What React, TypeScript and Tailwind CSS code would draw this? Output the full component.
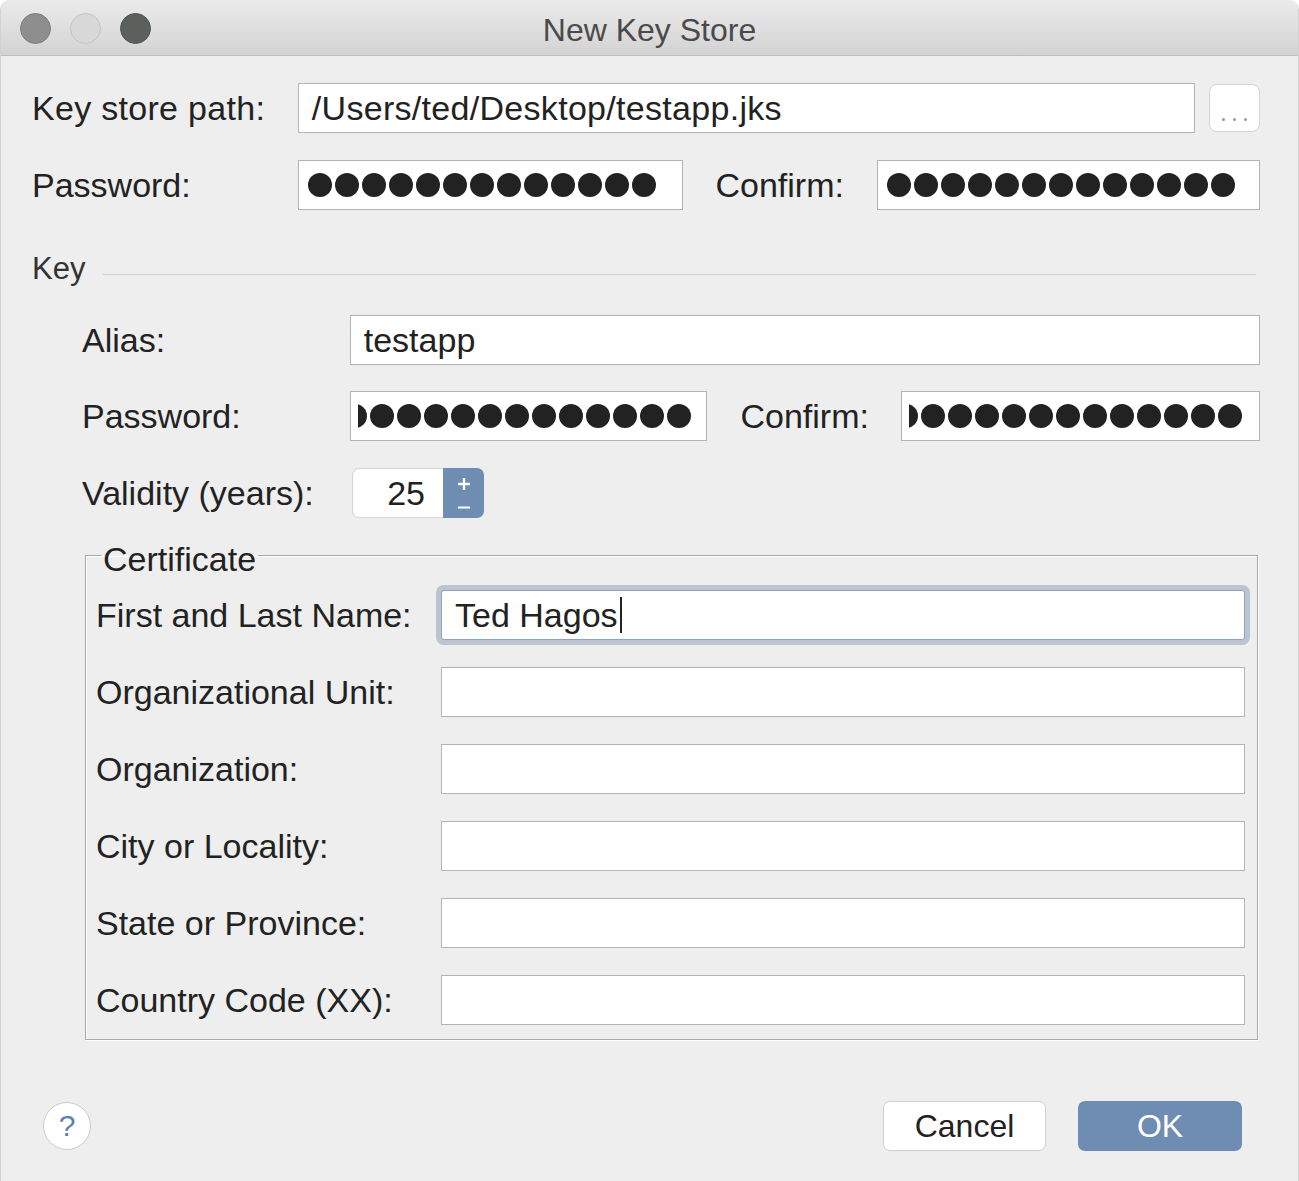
import React from 'react'

const font = { fontFamily: '"Liberation Sans", Arial, sans-serif' }

function Dots({ count, clipped = false }: { count: number; clipped?: boolean }) {
  return (
    <div className="flex h-full items-center gap-[3px] overflow-hidden">
      {clipped && <span className="-ml-[15px] h-[24px] w-[24px] shrink-0 rounded-full bg-[#222]" />}
      {Array.from({ length: count }).map((_, i) => (
        <span key={i} className="h-[24px] w-[24px] shrink-0 rounded-full bg-[#222]" />
      ))}
    </div>
  )
}

function Field({ className = '', children }: { className?: string; children?: React.ReactNode }) {
  return (
    <div className={`h-[50px] border border-[#b4b4b4] bg-white ${className}`}>{children}</div>
  )
}

const certRows = [
  'Organizational Unit:',
  'Organization:',
  'City or Locality:',
  'State or Province:',
  'Country Code (XX):',
]

export default function App() {
  return (
    <div style={font} className="h-[1181px] w-[1299px] overflow-hidden bg-white text-[34px] leading-none text-[#222]">
      <div className="flex h-full flex-col overflow-hidden rounded-t-[10px] border-x border-[#d2d2d2] bg-[#eeeeee]">
        {/* title bar */}
        <div className="relative flex h-[56px] shrink-0 items-center border-b border-[#bdbdbd] bg-gradient-to-b from-[#ebebeb] to-[#d3d3d3]">
          <div className="absolute left-[19px] top-[13px] flex gap-[19px]">
            <span className="h-[31px] w-[31px] rounded-full border border-[#7c7c7c] bg-[#8e8e8e]" />
            <span className="h-[31px] w-[31px] rounded-full border border-[#c4c4c4] bg-[#d8d8d8]" />
            <span className="h-[31px] w-[31px] rounded-full border border-[#4f5451] bg-[#5b605d]" />
          </div>
          <div className="w-full pt-[4px] text-center text-[32px] text-[#4a4a4a]">New Key Store</div>
        </div>

        <div className="flex flex-col pl-[31px] pr-[38px]">
          {/* key store path */}
          <div className="mt-[27px] flex h-[50px] items-center">
            <div className="w-[266px] tracking-[0.3px]">Key store path:</div>
            <Field className="flex w-[898px] items-center pl-[13px] tracking-[0.3px]">/Users/ted/Desktop/testapp.jks</Field>
            <div className="ml-[14px] flex h-[48px] w-[51px] items-end justify-center gap-[8px] rounded-[8px] border border-[#d4d4d4] bg-white pb-[10px]">
              <span className="h-[3px] w-[3px] rounded-full bg-[#999]" />
              <span className="h-[3px] w-[3px] rounded-full bg-[#999]" />
              <span className="h-[3px] w-[3px] rounded-full bg-[#999]" />
            </div>
          </div>

          {/* password */}
          <div className="mt-[27px] flex h-[50px] items-center">
            <div className="w-[266px]">Password:</div>
            <Field className="w-[386px] pl-[9px]"><Dots count={13} /></Field>
            <div className="ml-[32px] w-[162px]">Confirm:</div>
            <Field className="w-[383px] pl-[9px]"><Dots count={13} /></Field>
          </div>

          {/* key separator */}
          <div className="mt-[41px] flex h-[34px] items-center">
            <div className="text-[31px] text-[#333]">Key</div>
            <div className="ml-[18px] mt-[12px] h-px w-[1153px] bg-[#cfcfcf]" />
          </div>

          <div className="flex flex-col pl-[50px]">
            <div className="mt-[30px] flex h-[50px] items-center">
              <div className="w-[268px]">Alias:</div>
              <Field className="flex w-[911px] items-center pl-[13px]">testapp</Field>
            </div>
            <div className="mt-[26px] flex h-[50px] items-center">
              <div className="w-[268px]">Password:</div>
              <Field className="w-[358px] pl-[7px]"><Dots count={12} clipped /></Field>
              <div className="ml-[33px] w-[161px]">Confirm:</div>
              <Field className="w-[359px] pl-[7px]"><Dots count={12} clipped /></Field>
            </div>
            <div className="mt-[27px] flex h-[50px] items-center">
              <div className="w-[270px]">Validity (years):</div>
              <div className="flex h-[50px]">
                <div className="flex w-[91px] items-center justify-end rounded-l-[7px] border border-r-0 border-[#d4d4d4] bg-white pr-[18px]">25</div>
                <div className="flex w-[41px] flex-col items-center justify-center gap-[15px] rounded-r-[7px] bg-[#6f8db3]">
                  <svg width="14" height="14" viewBox="0 0 14 14">
                    <path d="M7 1v12M1 7h12" stroke="#fff" strokeWidth="2.4" />
                  </svg>
                  <svg width="14" height="3" viewBox="0 0 14 3">
                    <path d="M1 1.5h12" stroke="#fff" strokeWidth="2" />
                  </svg>
                </div>
              </div>
            </div>
          </div>

          {/* certificate */}
          <fieldset className="ml-[53px] mt-[20px] w-[1173px] border border-[#a8a8a8] pb-[14px] pl-[10px] pr-[12px] shadow-[inset_1px_1px_0_#fff,1px_1px_0_#fff]">
            <legend className="ml-[5px] px-[2px] text-[34px] leading-[34px]">
              <span className="relative top-[4px]">Certificate</span>
            </legend>
            <div className="mt-[18px] flex h-[50px] items-center">
              <div className="w-[345px]">First and Last Name:</div>
              <div className="flex h-[50px] w-[804px] items-center rounded-[3px] border border-[#8ea3c0] bg-white pl-[13px] shadow-[0_0_0_5px_#bcc4d0]">
                Ted Hagos
                <span className="ml-[2px] h-[36px] w-[2px] bg-[#222]" />
              </div>
            </div>
            {certRows.map((label) => (
              <div key={label} className="mt-[27px] flex h-[50px] items-center">
                <div className="w-[345px]">{label}</div>
                <Field className="w-[804px]" />
              </div>
            ))}
          </fieldset>

          {/* footer */}
          <div className="mt-[61px] flex h-[50px] items-center">
            <div className="ml-[11px] flex h-[48px] w-[48px] items-center justify-center rounded-full border border-[#cbcbcb] bg-white text-[30px] text-[#5a7fb0]">?</div>
            <div className="ml-auto mr-[18px] flex gap-[32px]">
              <div className="flex h-[50px] w-[163px] items-center justify-center rounded-[7px] border border-[#d0d0d0] bg-white text-[32px]">Cancel</div>
              <div className="flex h-[50px] w-[164px] items-center justify-center rounded-[7px] bg-[#6f8db3] text-[32px] text-white">OK</div>
            </div>
          </div>
        </div>
      </div>
    </div>
  )
}
